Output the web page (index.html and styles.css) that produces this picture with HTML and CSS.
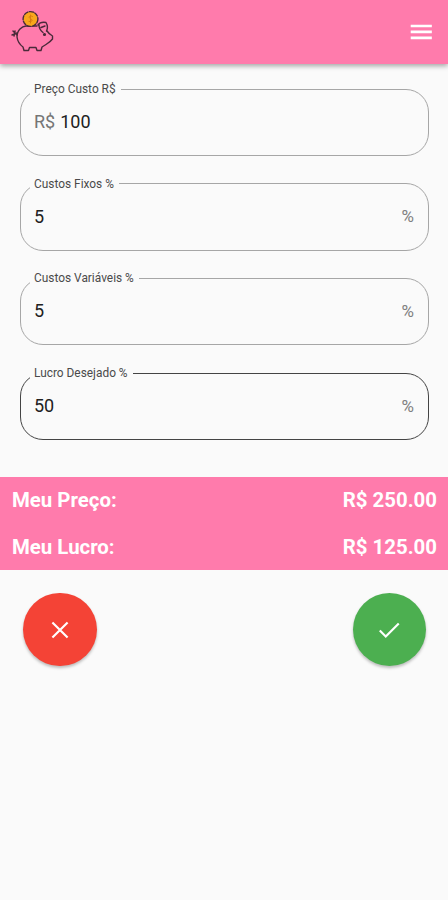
FILE: index.html
```html
<!DOCTYPE html>
<html lang="pt-BR">
<head>
<meta charset="UTF-8">
<meta name="viewport" content="width=device-width, initial-scale=1.0">
<title>Meu Preço</title>
<link rel="stylesheet" href="styles.css">
</head>
<body>
    <header class="topbar">
        <svg class="logo" viewBox="0 0 44 44" fill="none" stroke="#4a2a3a" stroke-width="1.4" stroke-linejoin="round" stroke-linecap="round">
            <path d="M9 19 C11 17 13 16.2 15 16 H26 M36 21 C38 24 38 24 41.500 26 V29 C40 31 37.500 33 35 34.500 L31 37 L30 40.500 H26 L25 37.500 H18.500 L17.500 40.500 H13 L12 37 C8 34 6.500 31 6 27 C6 23 7 21 9 19"/>
            <path d="M27 15 C29 12 32 12 35 12.500 C36.500 15 37 18 35.500 21 M28 15 C28 18 30 21 32 22.500 M30 17.500 L34 16"/>
            <path d="M6 25 L2 21 M6 23 L1 25 M4 21 L3 26" stroke-width="1.500"/>
            <circle cx="33.500" cy="24.500" r=".9" fill="#4a2a3a"/>
            <circle cx="19.500" cy="9" r="7.400" fill="#f9a61c" stroke-dasharray="4 1.600"/>
            <path d="M21.500 6.500 C19 5 17 7 19 8.500 C22 9.500 22 12 18 11.500 M19.500 5 V13" stroke="#d97b10" stroke-width="1"/>
        </svg>
        <button type="button" class="menu-button" aria-label="Menu">
            <svg viewBox="0 0 24 24" fill="#fff"><path d="M2.500 5.200h19.500v2.500H2.500zM2.500 10.700h19.500v2.500H2.500zM2.500 16.200h19.500v2.500H2.500z"/></svg>
        </button>
    </header>

    <form class="price-form">
        <fieldset class="field">
            <legend>Preço Custo R$</legend>
            <span class="prefix">R$</span>
            <input type="text" value="100" aria-label="Preço Custo">
        </fieldset>
        <fieldset class="field">
            <legend>Custos Fixos %</legend>
            <input type="text" value="5" aria-label="Custos Fixos">
            <span class="suffix">%</span>
        </fieldset>
        <fieldset class="field">
            <legend>Custos Variáveis %</legend>
            <input type="text" value="5" aria-label="Custos Variáveis">
            <span class="suffix">%</span>
        </fieldset>
        <fieldset class="field field-active">
            <legend>Lucro Desejado %</legend>
            <input type="text" value="50" aria-label="Lucro Desejado">
            <span class="suffix">%</span>
        </fieldset>
    </form>

    <div class="results">
        <div class="result-row"><span>Meu Preço:</span><span>R$ 250.00</span></div>
        <div class="result-row"><span>Meu Lucro:</span><span>R$ 125.00</span></div>
    </div>

    <div class="actions">
        <button type="button" class="round-button clear" aria-label="Limpar">
            <svg viewBox="0 0 24 24" fill="none" stroke="#fff" stroke-width="2"><path d="M5 5l14 14M19 5l-14 14"/></svg>
        </button>
        <button type="button" class="round-button confirm" aria-label="Calcular">
            <svg viewBox="0 0 24 24" fill="none" stroke="#fff" stroke-width="2"><path d="M3.500 12.500l5.500 5.500L21 6"/></svg>
        </button>
    </div>
</body>
</html>
```

FILE: styles.css
```css
body {
    margin: 0;
    min-height: 100vh;
    background-color: #fafafa;
    font-family: Roboto, Arial, sans-serif;
    color: #212121;
}
button {
    border: none;
    padding: 0;
    cursor: pointer;
}
.topbar {
    display: flex;
    justify-content: space-between;
    align-items: center;
    height: 64px;
    padding: 0 14px 0 11px;
    box-sizing: border-box;
    background-color: #ff7bac;
    box-shadow: 0 2px 5px rgba(0, 0, 0, 0.35);
}
.logo {
    width: 44px;
    height: 44px;
}
.menu-button {
    width: 26px;
    height: 26px;
    background: none;
}
.menu-button svg {
    display: block;
}
.price-form {
    display: flex;
    flex-direction: column;
    gap: 20.7px;
    padding: 18px 19px 0 20px;
}
.field {
    display: flex;
    align-items: center;
    height: 74px;
    margin: 0;
    padding: 15px 14px 0 9px;
    box-sizing: border-box;
    border: 1px solid #a6a6a6;
    border-radius: 23px;
    font-size: 18px;
}
.field-active {
    border-color: #444;
}
.field legend {
    padding: 0 5px 0 4px;
    font-size: 11.9px;
    line-height: 14px;
    color: #4a4a4a;
}
.field input {
    flex: 1;
    min-width: 0;
    margin: 0;
    padding: 0 0 0 4px;
    border: none;
    outline: none;
    background: none;
    font: inherit;
    color: #212121;
}
.prefix {
    padding-left: 4px;
    color: #757575;
}
.prefix + input {
    padding-left: 5px;
}
.suffix {
    font-size: 17px;
    color: #808080;
}
.results {
    margin-top: 37px;
    background-color: #ff7bac;
}
.result-row {
    display: flex;
    justify-content: space-between;
    padding: 0 11px 0 12px;
    font-size: 20.4px;
    font-weight: 700;
    line-height: 46.6px;
    color: #fff;
}
.actions {
    display: flex;
    justify-content: space-between;
    padding: 22.5px 22px 0 23px;
}
.round-button {
    display: flex;
    align-items: center;
    justify-content: center;
    width: 73.5px;
    height: 73.5px;
    border-radius: 50%;
    box-shadow: 0 2px 3px rgba(0, 0, 0, 0.25);
}
.round-button svg {
    width: 26px;
    height: 26px;
}
.clear {
    background-color: #f44336;
}
.confirm {
    background-color: #4caf50;
}
```
